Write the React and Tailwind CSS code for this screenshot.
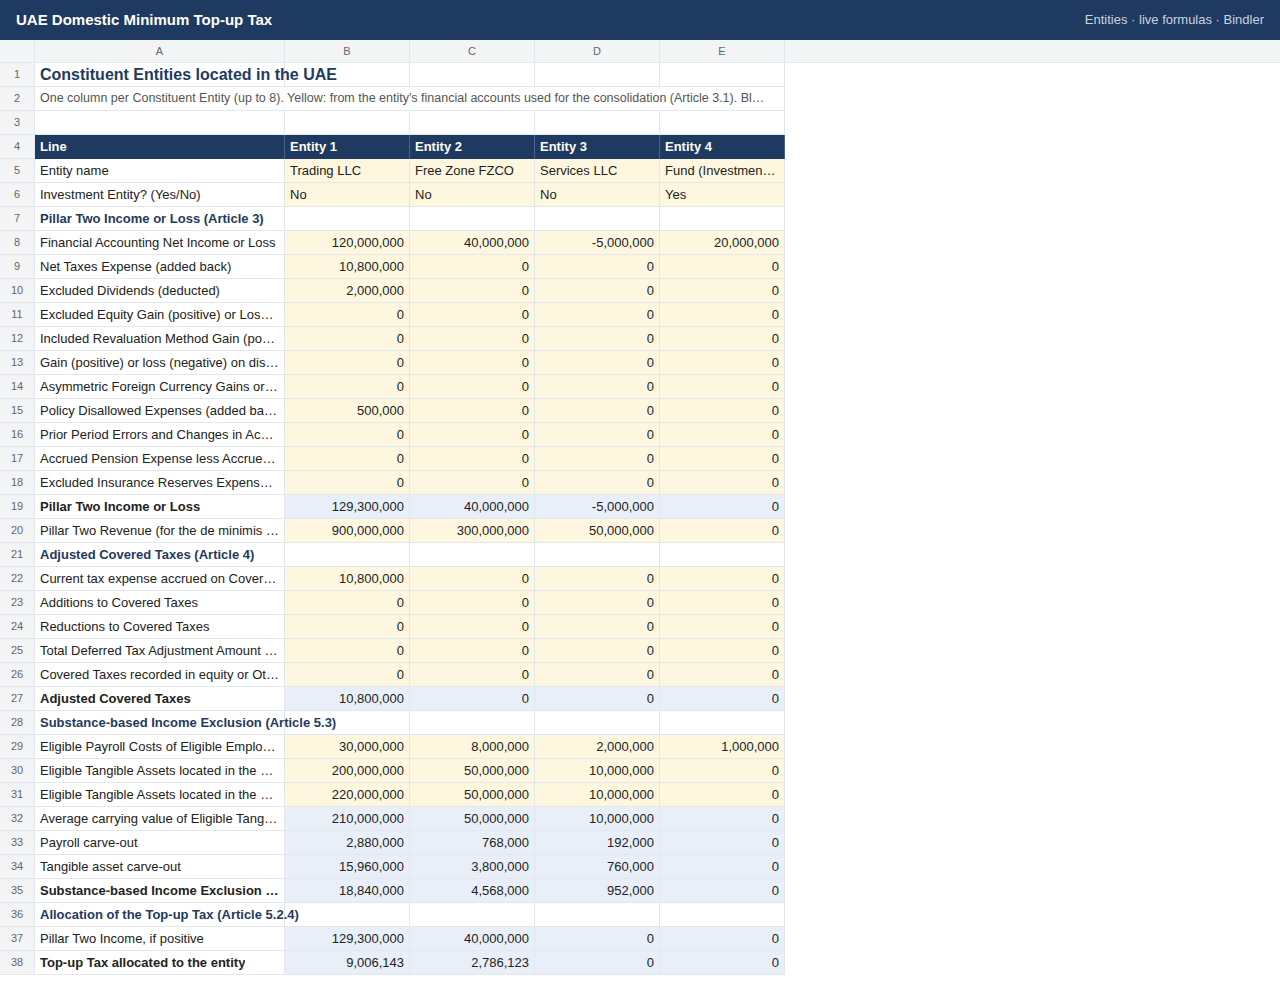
const rows = [
  ["y", "Entity name", "Trading LLC", "Free Zone FZCO", "Services LLC", "Fund (Investment …"],
  ["y", "Investment Entity? (Yes/No)", "No", "No", "No", "Yes"],
  ["s", "Pillar Two Income or Loss (Article 3)"],
  ["n", "Financial Accounting Net Income or Loss", "120,000,000", "40,000,000", "-5,000,000", "20,000,000"],
  ["n", "Net Taxes Expense (added back)", "10,800,000", "0", "0", "0"],
  ["n", "Excluded Dividends (deducted)", "2,000,000", "0", "0", "0"],
  ["n", "Excluded Equity Gain (positive) or Loss (…", "0", "0", "0", "0"],
  ["n", "Included Revaluation Method Gain (posi…", "0", "0", "0", "0"],
  ["n", "Gain (positive) or loss (negative) on disp…", "0", "0", "0", "0"],
  ["n", "Asymmetric Foreign Currency Gains or L…", "0", "0", "0", "0"],
  ["n", "Policy Disallowed Expenses (added back)", "500,000", "0", "0", "0"],
  ["n", "Prior Period Errors and Changes in Acco…", "0", "0", "0", "0"],
  ["n", "Accrued Pension Expense less Accrued …", "0", "0", "0", "0"],
  ["n", "Excluded Insurance Reserves Expense a…", "0", "0", "0", "0"],
  ["B", "Pillar Two Income or Loss", "129,300,000", "40,000,000", "-5,000,000", "0"],
  ["n", "Pillar Two Revenue (for the de minimis e…", "900,000,000", "300,000,000", "50,000,000", "0"],
  ["s", "Adjusted Covered Taxes (Article 4)"],
  ["n", "Current tax expense accrued on Covere…", "10,800,000", "0", "0", "0"],
  ["n", "Additions to Covered Taxes", "0", "0", "0", "0"],
  ["n", "Reductions to Covered Taxes", "0", "0", "0", "0"],
  ["n", "Total Deferred Tax Adjustment Amount (…", "0", "0", "0", "0"],
  ["n", "Covered Taxes recorded in equity or Oth…", "0", "0", "0", "0"],
  ["B", "Adjusted Covered Taxes", "10,800,000", "0", "0", "0"],
  ["s", "Substance-based Income Exclusion (Article 5.3)"],
  ["n", "Eligible Payroll Costs of Eligible Employ…", "30,000,000", "8,000,000", "2,000,000", "1,000,000"],
  ["n", "Eligible Tangible Assets located in the U…", "200,000,000", "50,000,000", "10,000,000", "0"],
  ["n", "Eligible Tangible Assets located in the U…", "220,000,000", "50,000,000", "10,000,000", "0"],
  ["b", "Average carrying value of Eligible Tangib…", "210,000,000", "50,000,000", "10,000,000", "0"],
  ["b", "Payroll carve-out", "2,880,000", "768,000", "192,000", "0"],
  ["b", "Tangible asset carve-out", "15,960,000", "3,800,000", "760,000", "0"],
  ["B", "Substance-based Income Exclusion of…", "18,840,000", "4,568,000", "952,000", "0"],
  ["s", "Allocation of the Top-up Tax (Article 5.2.4)"],
  ["b", "Pillar Two Income, if positive", "129,300,000", "40,000,000", "0", "0"],
  ["B", "Top-up Tax allocated to the entity", "9,006,143", "2,786,123", "0", "0"],
];

const line = "border-r border-b border-[#e3e6ea]";
const cell = `h-6 ${line} px-[5px] flex items-center overflow-hidden whitespace-nowrap`;
const num = `h-6 flex items-center justify-center text-[11px] text-[#666] bg-[#f3f4f6] ${line}`;

export default function App() {
  return (
    <div className="min-h-[982px] bg-white text-[13px] text-[#222]" style={{ fontFamily: '"Liberation Sans", Arial, sans-serif' }}>
      <div className="h-10 bg-[#1f3a60] flex items-center justify-between px-4 text-white">
        <div className="text-[15px] font-bold">UAE Domestic Minimum Top-up Tax</div>
        <div className="text-[13px] text-[#c9d3e0]">Entities · live formulas · Bindler</div>
      </div>
      <div className="grid grid-cols-[35px_250px_125px_125px_125px_125px_1fr]">
        <div className={`h-[23px] bg-[#f3f4f6] ${line}`} />
        {["A", "B", "C", "D", "E"].map((l) => (
          <div key={l} className={`h-[23px] bg-[#f3f4f6] ${line} flex items-center justify-center text-[11px] text-[#666]`}>{l}</div>
        ))}
        <div className="h-[23px] bg-[#f3f4f6] border-b border-[#e3e6ea]" />

        <div className={num}>1</div>
        <div className={`h-6 ${line} relative`}>
          <div className="absolute inset-y-0 left-0 z-10 px-[5px] flex items-center text-[16px] font-bold text-[#1f3a60] whitespace-nowrap">Constituent Entities located in the UAE</div>
        </div>
        {[0, 1, 2, 3].map((i) => <div key={i} className={cell} />)}
        <div />

        <div className={num}>2</div>
        <div className={`${cell} col-span-5 text-[#555] text-[12.5px]`}><span className="truncate">One column per Constituent Entity (up to 8). Yellow: from the entity's financial accounts used for the consolidation (Article 3.1). Bl…</span></div>
        <div />

        <div className={num}>3</div>
        {[0, 1, 2, 3, 4].map((i) => <div key={i} className={cell} />)}
        <div />

        <div className={num}>4</div>
        {["Line", "Entity 1", "Entity 2", "Entity 3", "Entity 4"].map((t) => (
          <div key={t} className="h-6 bg-[#1f3a60] text-white font-bold px-[5px] flex items-center border-r border-[#4a6285]">{t}</div>
        ))}
        <div />

        {rows.map((r, i) => {
          const [t, label, ...vals] = r;
          const bg = t === "y" || t === "n" ? "bg-[#fdf7e0]" : "bg-[#e8eff9]";
          return [
            <div key={i + "n"} className={num}>{i + 5}</div>,
            t === "s" ? (
              <div key={i + "a"} className={`h-6 ${line} relative`}>
                <div className="absolute inset-y-0 left-0 z-10 px-[5px] flex items-center font-bold text-[#1f3a60] whitespace-nowrap">{label}</div>
              </div>
            ) : (
              <div key={i + "a"} className={`${cell} ${t === "B" ? "font-bold" : ""}`}><span className="truncate">{label}</span></div>
            ),
            ...[0, 1, 2, 3].map((j) => (
              <div key={i + "v" + j} className={`${cell} ${t === "s" ? "" : bg} ${t === "y" ? "" : "justify-end"}`}><span className="truncate">{vals[j] ?? ""}</span></div>
            )),
            <div key={i + "e"} />,
          ];
        })}
      </div>
    </div>
  );
}
